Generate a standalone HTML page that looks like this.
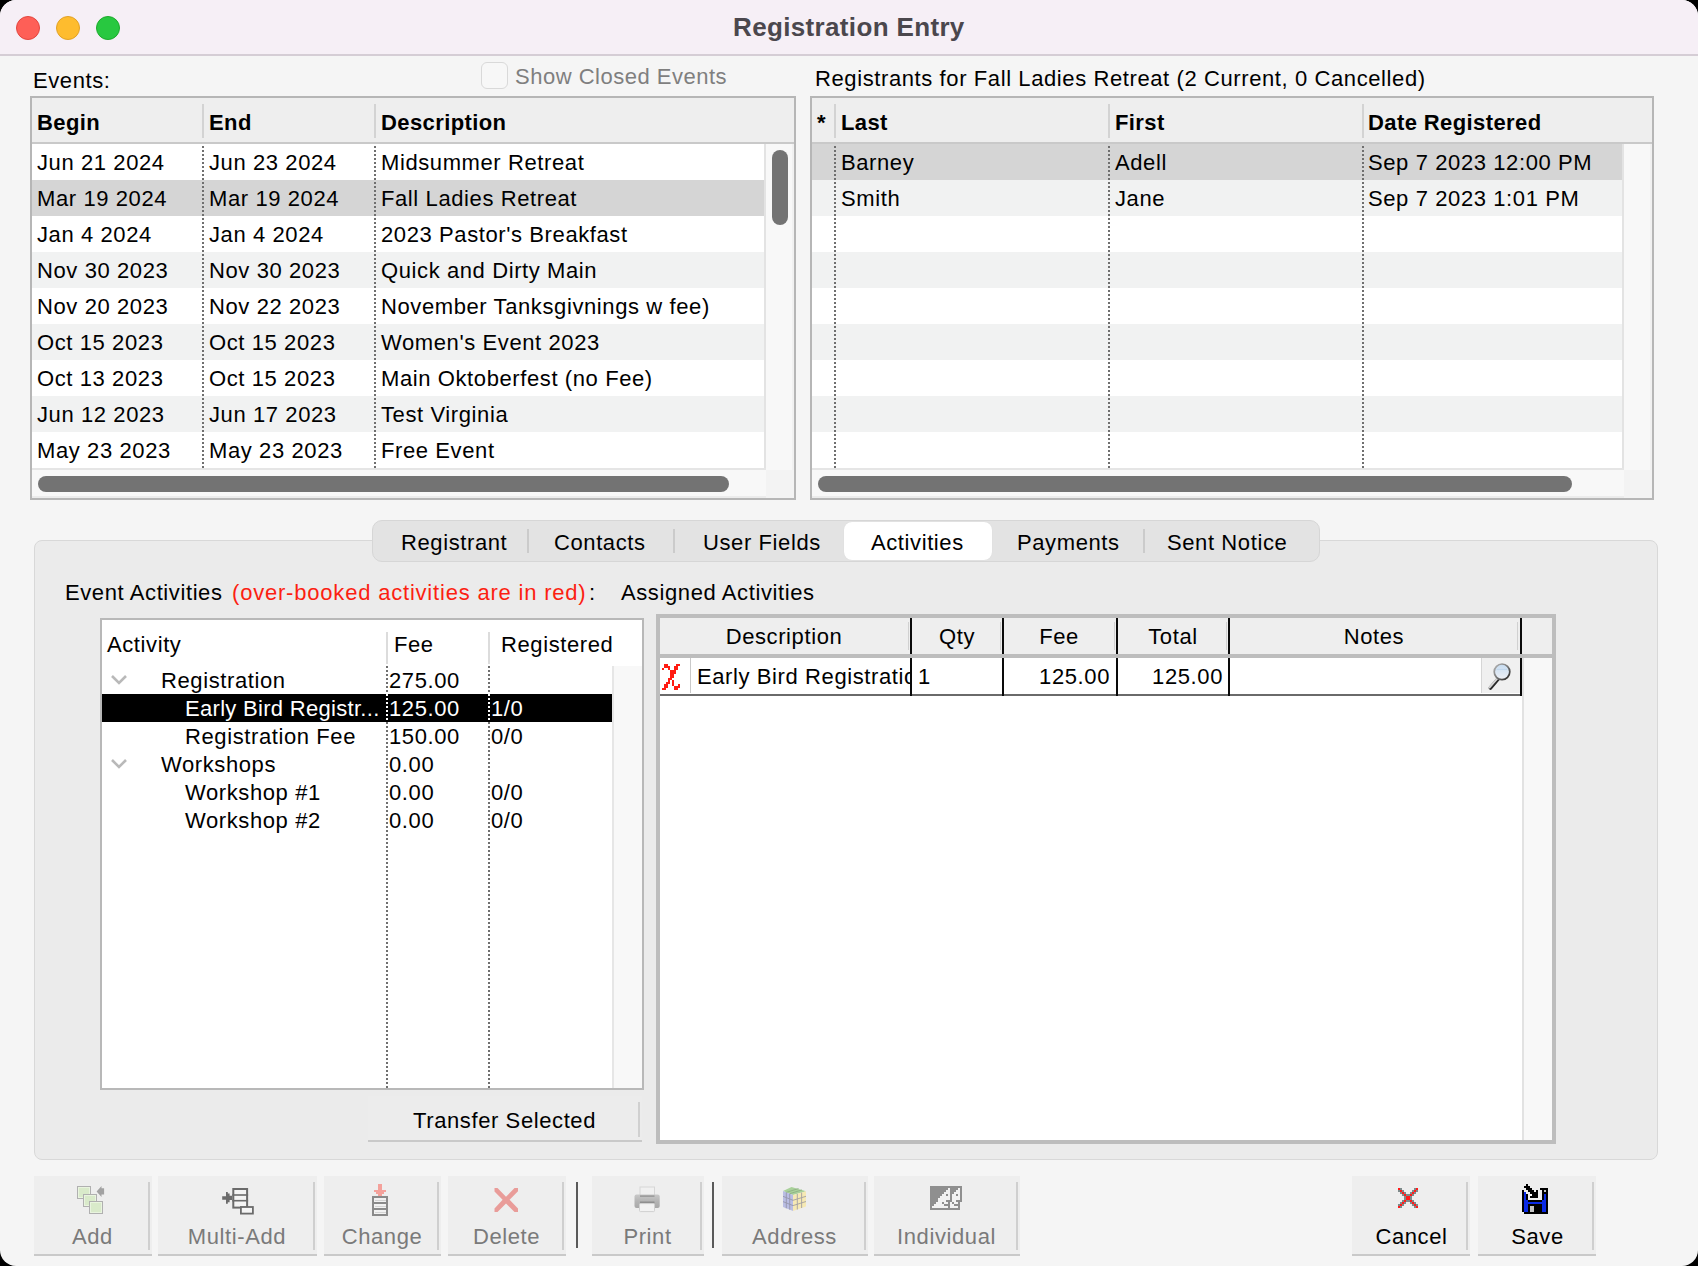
<!DOCTYPE html>
<html><head><meta charset="utf-8">
<style>
html,body{margin:0;padding:0;background:#000;width:1698px;height:1266px;overflow:hidden}
*{box-sizing:border-box}
#win{position:absolute;left:0;top:0;width:1698px;height:1266px;background:#f5f5f5;border-radius:16px;overflow:hidden;font-family:"Liberation Sans",sans-serif;color:#000}
.a{position:absolute}
.t{position:absolute;font-size:22px;line-height:22px;white-space:nowrap;letter-spacing:0.6px}
.b{font-weight:bold;letter-spacing:0.4px}
.dot{position:absolute;width:24px;height:24px;border-radius:50%}
.vd{position:absolute;width:2px;background:repeating-linear-gradient(to bottom,#6f6f6f 0,#6f6f6f 2px,transparent 2px,transparent 4px)}
.g{color:#7b7b7b}
</style></head><body>
<div id="win">

<div class="a" style="left:0px;top:0px;width:1698px;height:54px;background:#f6eff6"></div>
<div class="a" style="left:0px;top:54px;width:1698px;height:2px;background:#d5cdd5"></div>
<div class="dot" style="left:16px;top:16px;background:#fe5f57;border:1px solid #e2463f"></div>
<div class="dot" style="left:56px;top:16px;background:#febc2e;border:1px solid #e1a126"></div>
<div class="dot" style="left:96px;top:16px;background:#28c840;border:1px solid #1daa2c"></div>
<div class="t b" style="left:733px;top:14px;font-size:26px;line-height:26px;color:#4b474d;letter-spacing:0.35px">Registration Entry</div>
<div class="t " style="left:33px;top:70px;">Events:</div>
<div class="a" style="left:481px;top:62px;width:27px;height:27px;border:1px solid #d9d9d9;border-radius:6px;background:#f7f7f7"></div>
<div class="t " style="left:515px;top:66px;color:#7f7f7f;letter-spacing:0.5px">Show Closed Events</div>
<div class="t " style="left:815px;top:68px;">Registrants for Fall Ladies Retreat (2 Current, 0 Cancelled)</div>
<div class="a" style="left:30px;top:96px;width:766px;height:404px;background:#fff;border:2px solid #b6b6b6"></div>
<div class="a" style="left:32px;top:98px;width:762px;height:44px;background:#eeeeee"></div>
<div class="a" style="left:32px;top:142px;width:762px;height:2px;background:#c9c9c9"></div>
<div class="a" style="left:202px;top:104px;width:2px;height:34px;background:#d3d3d3"></div>
<div class="a" style="left:374px;top:104px;width:2px;height:34px;background:#d3d3d3"></div>
<div class="t b" style="left:37px;top:112px;">Begin</div>
<div class="t b" style="left:209px;top:112px;">End</div>
<div class="t b" style="left:381px;top:112px;">Description</div>
<div class="a" style="left:32px;top:144px;width:732px;height:36px;background:#ffffff"></div>
<div class="a" style="left:32px;top:180px;width:732px;height:36px;background:#d5d5d5"></div>
<div class="a" style="left:32px;top:216px;width:732px;height:36px;background:#ffffff"></div>
<div class="a" style="left:32px;top:252px;width:732px;height:36px;background:#f1f2f2"></div>
<div class="a" style="left:32px;top:288px;width:732px;height:36px;background:#ffffff"></div>
<div class="a" style="left:32px;top:324px;width:732px;height:36px;background:#f1f2f2"></div>
<div class="a" style="left:32px;top:360px;width:732px;height:36px;background:#ffffff"></div>
<div class="a" style="left:32px;top:396px;width:732px;height:36px;background:#f1f2f2"></div>
<div class="a" style="left:32px;top:432px;width:732px;height:36px;background:#ffffff"></div>
<div class="vd" style="left:202px;top:146px;height:322px"></div>
<div class="vd" style="left:374px;top:146px;height:322px"></div>
<div class="t " style="left:37px;top:152px;">Jun 21 2024</div>
<div class="t " style="left:209px;top:152px;">Jun 23 2024</div>
<div class="t " style="left:381px;top:152px;">Midsummer Retreat</div>
<div class="t " style="left:37px;top:188px;">Mar 19 2024</div>
<div class="t " style="left:209px;top:188px;">Mar 19 2024</div>
<div class="t " style="left:381px;top:188px;">Fall Ladies Retreat</div>
<div class="t " style="left:37px;top:224px;">Jan 4 2024</div>
<div class="t " style="left:209px;top:224px;">Jan 4 2024</div>
<div class="t " style="left:381px;top:224px;">2023 Pastor's Breakfast</div>
<div class="t " style="left:37px;top:260px;">Nov 30 2023</div>
<div class="t " style="left:209px;top:260px;">Nov 30 2023</div>
<div class="t " style="left:381px;top:260px;">Quick and Dirty Main</div>
<div class="t " style="left:37px;top:296px;">Nov 20 2023</div>
<div class="t " style="left:209px;top:296px;">Nov 22 2023</div>
<div class="t " style="left:381px;top:296px;">November Tanksgivnings w fee)</div>
<div class="t " style="left:37px;top:332px;">Oct 15 2023</div>
<div class="t " style="left:209px;top:332px;">Oct 15 2023</div>
<div class="t " style="left:381px;top:332px;">Women's Event 2023</div>
<div class="t " style="left:37px;top:368px;">Oct 13 2023</div>
<div class="t " style="left:209px;top:368px;">Oct 15 2023</div>
<div class="t " style="left:381px;top:368px;">Main Oktoberfest (no Fee)</div>
<div class="t " style="left:37px;top:404px;">Jun 12 2023</div>
<div class="t " style="left:209px;top:404px;">Jun 17 2023</div>
<div class="t " style="left:381px;top:404px;">Test Virginia</div>
<div class="t " style="left:37px;top:440px;">May 23 2023</div>
<div class="t " style="left:209px;top:440px;">May 23 2023</div>
<div class="t " style="left:381px;top:440px;">Free Event</div>
<div class="a" style="left:764px;top:144px;width:2px;height:326px;background:#e3e3e3"></div>
<div class="a" style="left:766px;top:144px;width:26px;height:326px;background:#f8f8f8"></div>
<div class="a" style="left:792px;top:144px;width:2px;height:326px;background:#f1f1f1"></div>
<div class="a" style="left:32px;top:468px;width:734px;height:2px;background:#e5e5e5"></div>
<div class="a" style="left:32px;top:470px;width:734px;height:26px;background:#f8f8f8"></div>
<div class="a" style="left:32px;top:496px;width:734px;height:2px;background:#ececec"></div>
<div class="a" style="left:766px;top:470px;width:28px;height:28px;background:#f3f3f3"></div>
<div class="a" style="left:772px;top:150px;width:16px;height:75px;background:#737373;border-radius:8px"></div>
<div class="a" style="left:38px;top:476px;width:691px;height:16px;background:#737373;border-radius:8px"></div>
<div class="a" style="left:810px;top:96px;width:844px;height:404px;background:#fff;border:2px solid #b6b6b6"></div>
<div class="a" style="left:812px;top:98px;width:840px;height:44px;background:#eeeeee"></div>
<div class="a" style="left:812px;top:142px;width:840px;height:2px;background:#c9c9c9"></div>
<div class="a" style="left:834px;top:104px;width:2px;height:34px;background:#d3d3d3"></div>
<div class="a" style="left:1108px;top:104px;width:2px;height:34px;background:#d3d3d3"></div>
<div class="a" style="left:1362px;top:104px;width:2px;height:34px;background:#d3d3d3"></div>
<div class="t b" style="left:817px;top:112px;">*</div>
<div class="t b" style="left:841px;top:112px;">Last</div>
<div class="t b" style="left:1115px;top:112px;">First</div>
<div class="t b" style="left:1368px;top:112px;">Date Registered</div>
<div class="a" style="left:812px;top:144px;width:810px;height:36px;background:#d5d5d5"></div>
<div class="a" style="left:812px;top:180px;width:810px;height:36px;background:#f1f2f2"></div>
<div class="a" style="left:812px;top:216px;width:810px;height:36px;background:#ffffff"></div>
<div class="a" style="left:812px;top:252px;width:810px;height:36px;background:#f1f2f2"></div>
<div class="a" style="left:812px;top:288px;width:810px;height:36px;background:#ffffff"></div>
<div class="a" style="left:812px;top:324px;width:810px;height:36px;background:#f1f2f2"></div>
<div class="a" style="left:812px;top:360px;width:810px;height:36px;background:#ffffff"></div>
<div class="a" style="left:812px;top:396px;width:810px;height:36px;background:#f1f2f2"></div>
<div class="a" style="left:812px;top:432px;width:810px;height:36px;background:#ffffff"></div>
<div class="vd" style="left:834px;top:146px;height:322px"></div>
<div class="vd" style="left:1108px;top:146px;height:322px"></div>
<div class="vd" style="left:1362px;top:146px;height:322px"></div>
<div class="t " style="left:841px;top:152px;">Barney</div>
<div class="t " style="left:1115px;top:152px;">Adell</div>
<div class="t " style="left:1368px;top:152px;">Sep 7 2023 12:00 PM</div>
<div class="t " style="left:841px;top:188px;">Smith</div>
<div class="t " style="left:1115px;top:188px;">Jane</div>
<div class="t " style="left:1368px;top:188px;">Sep 7 2023 1:01 PM</div>
<div class="a" style="left:1622px;top:144px;width:2px;height:326px;background:#e3e3e3"></div>
<div class="a" style="left:1624px;top:144px;width:26px;height:326px;background:#f8f8f8"></div>
<div class="a" style="left:1650px;top:144px;width:2px;height:326px;background:#f1f1f1"></div>
<div class="a" style="left:812px;top:468px;width:812px;height:2px;background:#e5e5e5"></div>
<div class="a" style="left:812px;top:470px;width:812px;height:26px;background:#f8f8f8"></div>
<div class="a" style="left:812px;top:496px;width:812px;height:2px;background:#ececec"></div>
<div class="a" style="left:1624px;top:470px;width:28px;height:28px;background:#f3f3f3"></div>
<div class="a" style="left:818px;top:476px;width:754px;height:16px;background:#737373;border-radius:8px"></div>
<div class="a" style="left:34px;top:540px;width:1624px;height:620px;background:#ebebeb;border:1px solid #d8d8d8;border-radius:8px"></div>
<div class="a" style="left:372px;top:520px;width:948px;height:42px;background:#e3e3e3;border:1px solid #d6d6d6;border-radius:10px"></div>
<div class="a" style="left:844px;top:522px;width:148px;height:38px;background:#ffffff;border-radius:8px;box-shadow:0 0 1px rgba(0,0,0,0.08)"></div>
<div class="a" style="left:527px;top:529px;width:2px;height:24px;background:#cbcbcb"></div>
<div class="a" style="left:673px;top:529px;width:2px;height:24px;background:#cbcbcb"></div>
<div class="a" style="left:1143px;top:529px;width:2px;height:24px;background:#cbcbcb"></div>
<div class="t " style="left:401px;top:532px;">Registrant</div>
<div class="t " style="left:554px;top:532px;">Contacts</div>
<div class="t " style="left:703px;top:532px;">User Fields</div>
<div class="t " style="left:871px;top:532px;">Activities</div>
<div class="t " style="left:1017px;top:532px;">Payments</div>
<div class="t " style="left:1167px;top:532px;">Sent Notice</div>
<div class="t " style="left:65px;top:582px;">Event Activities</div>
<div class="t " style="left:232px;top:582px;color:#fc1f12;letter-spacing:0.8px">(over-booked activities are in red)</div>
<div class="t " style="left:589px;top:582px;">:</div>
<div class="t " style="left:621px;top:582px;">Assigned Activities</div>
<div class="a" style="left:100px;top:618px;width:544px;height:472px;background:#fff;border:2px solid #b8b8b8"></div>
<div class="a" style="left:386px;top:632px;width:2px;height:32px;background:#dcdcdc"></div>
<div class="a" style="left:488px;top:632px;width:2px;height:32px;background:#dcdcdc"></div>
<div class="t " style="left:107px;top:634px;">Activity</div>
<div class="t " style="left:394px;top:634px;">Fee</div>
<div class="t " style="left:501px;top:634px;">Registered</div>
<div class="a" style="left:612px;top:666px;width:2px;height:422px;background:#e6e6e6"></div>
<div class="a" style="left:614px;top:666px;width:28px;height:422px;background:#f8f8f8"></div>
<div class="a" style="left:102px;top:694px;width:510px;height:28px;background:#000"></div>
<div class="vd" style="left:386px;top:666px;height:422px"></div>
<div class="vd" style="left:488px;top:666px;height:422px"></div>
<div class="a" style="left:386px;top:694px;width:2px;height:28px;background:repeating-linear-gradient(to bottom,#fff 0,#fff 2px,#000 2px,#000 4px)"></div>
<div class="a" style="left:488px;top:694px;width:2px;height:28px;background:repeating-linear-gradient(to bottom,#fff 0,#fff 2px,#000 2px,#000 4px)"></div>
<svg class="a" style="left:110px;top:674px" width="18" height="12" viewBox="0 0 18 12"><polyline points="2,2 9,9 16,2" fill="none" stroke="#b9b9b9" stroke-width="2.6" stroke-linecap="butt"/></svg>
<div class="t " style="left:161px;top:670px;">Registration</div>
<div class="t " style="left:389px;top:670px;">275.00</div>
<div class="t " style="left:185px;top:698px;color:#fff;letter-spacing:0.3px">Early Bird Registr...</div>
<div class="t " style="left:389px;top:698px;color:#fff">125.00</div>
<div class="t " style="left:491px;top:698px;color:#fff">1/0</div>
<div class="t " style="left:185px;top:726px;">Registration Fee</div>
<div class="t " style="left:389px;top:726px;">150.00</div>
<div class="t " style="left:491px;top:726px;">0/0</div>
<svg class="a" style="left:110px;top:758px" width="18" height="12" viewBox="0 0 18 12"><polyline points="2,2 9,9 16,2" fill="none" stroke="#b9b9b9" stroke-width="2.6" stroke-linecap="butt"/></svg>
<div class="t " style="left:161px;top:754px;">Workshops</div>
<div class="t " style="left:389px;top:754px;">0.00</div>
<div class="t " style="left:185px;top:782px;">Workshop #1</div>
<div class="t " style="left:389px;top:782px;">0.00</div>
<div class="t " style="left:491px;top:782px;">0/0</div>
<div class="t " style="left:185px;top:810px;">Workshop #2</div>
<div class="t " style="left:389px;top:810px;">0.00</div>
<div class="t " style="left:491px;top:810px;">0/0</div>
<div class="a" style="left:368px;top:1096px;width:274px;height:46px;background:#ececec;border-bottom:2px solid #c9c9c9"></div>
<div class="a" style="left:638px;top:1102px;width:2px;height:35px;background:#d0d0d0"></div>
<div class="t " style="left:413px;top:1110px;">Transfer Selected</div>
<div class="a" style="left:656px;top:614px;width:900px;height:530px;background:#fff;border:4px solid #bdbdbd"></div>
<div class="a" style="left:660px;top:618px;width:892px;height:36px;background:#eeeeee"></div>
<div class="a" style="left:660px;top:654px;width:892px;height:4px;background:#bdbdbd"></div>
<div class="a" style="left:1522px;top:658px;width:2px;height:482px;background:#e2e2e2"></div>
<div class="a" style="left:1524px;top:658px;width:28px;height:482px;background:#f8f8f8"></div>
<div class="a" style="left:908px;top:622px;width:1px;height:28px;background:#d0d0d0"></div>
<div class="a" style="left:1000px;top:622px;width:1px;height:28px;background:#d0d0d0"></div>
<div class="a" style="left:1114px;top:622px;width:1px;height:28px;background:#d0d0d0"></div>
<div class="a" style="left:1226px;top:622px;width:1px;height:28px;background:#d0d0d0"></div>
<div class="a" style="left:1517px;top:622px;width:1px;height:28px;background:#d0d0d0"></div>
<div class="a" style="left:660px;top:694px;width:862px;height:2px;background:#6a6a6a"></div>
<div class="a" style="left:910px;top:618px;width:2px;height:36px;background:#0a0a0a"></div>
<div class="a" style="left:910px;top:658px;width:2px;height:38px;background:#0a0a0a"></div>
<div class="a" style="left:1002px;top:618px;width:2px;height:36px;background:#0a0a0a"></div>
<div class="a" style="left:1002px;top:658px;width:2px;height:38px;background:#0a0a0a"></div>
<div class="a" style="left:1116px;top:618px;width:2px;height:36px;background:#0a0a0a"></div>
<div class="a" style="left:1116px;top:658px;width:2px;height:38px;background:#0a0a0a"></div>
<div class="a" style="left:1228px;top:618px;width:2px;height:36px;background:#0a0a0a"></div>
<div class="a" style="left:1228px;top:658px;width:2px;height:38px;background:#0a0a0a"></div>
<div class="a" style="left:1520px;top:618px;width:2px;height:36px;background:#0a0a0a"></div>
<div class="a" style="left:1520px;top:658px;width:2px;height:38px;background:#0a0a0a"></div>
<div class="t" style="left:634px;top:626px;width:300px;text-align:center">Description</div>
<div class="t" style="left:807px;top:626px;width:300px;text-align:center">Qty</div>
<div class="t" style="left:909px;top:626px;width:300px;text-align:center">Fee</div>
<div class="t" style="left:1023px;top:626px;width:300px;text-align:center">Total</div>
<div class="t" style="left:1224px;top:626px;width:300px;text-align:center">Notes</div>
<div class="a" style="left:690px;top:658px;width:1px;height:35px;background:#c9c9c9"></div>
<div class="a" style="left:696px;top:658px;width:214px;height:35px;overflow:hidden"><div class="t" style="left:1px;top:8px">Early Bird Registration</div></div>
<div class="t " style="left:918px;top:666px;">1</div>
<div class="t" style="left:960px;top:666px;width:150px;text-align:right">125.00</div>
<div class="t" style="left:1073px;top:666px;width:150px;text-align:right">125.00</div>
<div class="a" style="left:1481px;top:658px;width:39px;height:35px;background:#f0f0f0;border-left:1px solid #d6d6d6"></div>
<div class="a" style="left:34px;top:1176px;width:118px;height:80px;background:#eeeeee;border-bottom:2px solid #c9c9c9"></div>
<div class="a" style="left:148px;top:1182px;width:2px;height:68px;background:#cfcfcf"></div>
<div class="t" style="left:-65px;top:1226px;width:315px;text-align:center;color:#7a7a7a">Add</div>
<div class="a" style="left:158px;top:1176px;width:159px;height:80px;background:#eeeeee;border-bottom:2px solid #c9c9c9"></div>
<div class="a" style="left:313px;top:1182px;width:2px;height:68px;background:#cfcfcf"></div>
<div class="t" style="left:59px;top:1226px;width:356px;text-align:center;color:#7a7a7a">Multi-Add</div>
<div class="a" style="left:324px;top:1176px;width:117px;height:80px;background:#eeeeee;border-bottom:2px solid #c9c9c9"></div>
<div class="a" style="left:437px;top:1182px;width:2px;height:68px;background:#cfcfcf"></div>
<div class="t" style="left:225px;top:1226px;width:314px;text-align:center;color:#7a7a7a">Change</div>
<div class="a" style="left:448px;top:1176px;width:118px;height:80px;background:#eeeeee;border-bottom:2px solid #c9c9c9"></div>
<div class="a" style="left:562px;top:1182px;width:2px;height:68px;background:#cfcfcf"></div>
<div class="t" style="left:349px;top:1226px;width:315px;text-align:center;color:#7a7a7a">Delete</div>
<div class="a" style="left:592px;top:1176px;width:112px;height:80px;background:#eeeeee;border-bottom:2px solid #c9c9c9"></div>
<div class="a" style="left:700px;top:1182px;width:2px;height:68px;background:#cfcfcf"></div>
<div class="t" style="left:493px;top:1226px;width:309px;text-align:center;color:#7a7a7a">Print</div>
<div class="a" style="left:722px;top:1176px;width:146px;height:80px;background:#eeeeee;border-bottom:2px solid #c9c9c9"></div>
<div class="a" style="left:864px;top:1182px;width:2px;height:68px;background:#cfcfcf"></div>
<div class="t" style="left:623px;top:1226px;width:343px;text-align:center;color:#7a7a7a">Address</div>
<div class="a" style="left:874px;top:1176px;width:146px;height:80px;background:#eeeeee;border-bottom:2px solid #c9c9c9"></div>
<div class="a" style="left:1016px;top:1182px;width:2px;height:68px;background:#cfcfcf"></div>
<div class="t" style="left:775px;top:1226px;width:343px;text-align:center;color:#7a7a7a">Individual</div>
<div class="a" style="left:1352px;top:1176px;width:118px;height:80px;background:#eeeeee;border-bottom:2px solid #c9c9c9"></div>
<div class="a" style="left:1466px;top:1182px;width:2px;height:68px;background:#cfcfcf"></div>
<div class="t" style="left:1254px;top:1226px;width:315px;text-align:center;color:#000">Cancel</div>
<div class="a" style="left:1478px;top:1176px;width:118px;height:80px;background:#eeeeee;border-bottom:2px solid #c9c9c9"></div>
<div class="a" style="left:1592px;top:1182px;width:2px;height:68px;background:#cfcfcf"></div>
<div class="t" style="left:1380px;top:1226px;width:315px;text-align:center;color:#000">Save</div>
<div class="a" style="left:576px;top:1182px;width:2px;height:66px;background:#5a5a5a"></div>
<div class="a" style="left:712px;top:1182px;width:2px;height:66px;background:#5a5a5a"></div>
<svg class="a" style="left:662px;top:664px" width="18" height="26" shape-rendering="crispEdges"><rect x="2" y="0" width="4" height="2" fill="#ff1c12"/><rect x="14" y="0" width="4" height="2" fill="#ff1c12"/><rect x="2" y="2" width="6" height="2" fill="#ff1c12"/><rect x="12" y="2" width="4" height="2" fill="#ff1c12"/><rect x="0" y="4" width="2" height="2" fill="#ff1c12"/><rect x="6" y="4" width="2" height="2" fill="#ff1c12"/><rect x="12" y="4" width="4" height="2" fill="#ff1c12"/><rect x="8" y="6" width="6" height="2" fill="#ff1c12"/><rect x="8" y="8" width="6" height="2" fill="#ff1c12"/><rect x="8" y="10" width="4" height="2" fill="#ff1c12"/><rect x="8" y="12" width="4" height="2" fill="#ff1c12"/><rect x="6" y="14" width="4" height="2" fill="#ff1c12"/><rect x="6" y="16" width="2" height="2" fill="#ff1c12"/><rect x="10" y="16" width="2" height="2" fill="#ff1c12"/><rect x="4" y="18" width="4" height="2" fill="#ff1c12"/><rect x="10" y="18" width="2" height="2" fill="#ff1c12"/><rect x="2" y="20" width="4" height="2" fill="#ff1c12"/><rect x="10" y="20" width="2" height="2" fill="#ff1c12"/><rect x="16" y="20" width="2" height="2" fill="#ff1c12"/><rect x="2" y="22" width="4" height="2" fill="#ff1c12"/><rect x="12" y="22" width="6" height="2" fill="#ff1c12"/><rect x="0" y="24" width="4" height="2" fill="#ff1c12"/><rect x="12" y="24" width="4" height="2" fill="#ff1c12"/></svg>
<svg class="a" style="left:1482px;top:658px" width="38" height="36" viewBox="0 0 38 36"><defs><linearGradient id="lens" x1="0" y1="0" x2="0" y2="1"><stop offset="0" stop-color="#c6dcf1"/><stop offset="1" stop-color="#eef0f5"/></linearGradient><linearGradient id="rim" x1="0" y1="0" x2="1" y2="1"><stop offset="0" stop-color="#b8b8b8"/><stop offset="0.55" stop-color="#707070"/><stop offset="1" stop-color="#202020"/></linearGradient></defs><line x1="16.2" y1="20.8" x2="8.4" y2="30.0" stroke="#2a2a2a" stroke-width="3.6" stroke-linecap="round"/><line x1="15.4" y1="20.4" x2="7.6" y2="29.4" stroke="#d6d6d6" stroke-width="2.0" stroke-linecap="round"/><circle cx="20" cy="13.8" r="7.8" fill="url(#lens)" stroke="url(#rim)" stroke-width="1.7"/><line x1="14.6" y1="11.4" x2="25" y2="11.4" stroke="#b9d2ea" stroke-width="0.8"/></svg>
<svg class="a" style="left:70px;top:1180px" width="40" height="40"><rect x="7.5" y="6.5" width="13" height="12" fill="#d9eaca" stroke="#b0b0b0" stroke-width="1"/><rect x="8.5" y="7.5" width="11" height="10" fill="none" stroke="#e9f4df" stroke-width="1"/><rect x="13.5" y="14.5" width="13" height="12" fill="#d9eaca" stroke="#b0b0b0" stroke-width="1"/><rect x="14.5" y="15.5" width="11" height="10" fill="none" stroke="#e9f4df" stroke-width="1"/><rect x="19.5" y="21.5" width="13" height="12" fill="#d9eaca" stroke="#b0b0b0" stroke-width="1"/><rect x="20.5" y="22.5" width="11" height="10" fill="none" stroke="#e9f4df" stroke-width="1"/><polygon points="26.6,11.6 31.5,6 31.5,8.2 34.1,8.2 34.1,14.5 31.5,14.5 31.5,17" fill="#a2a2a2"/></svg>
<svg class="a" style="left:220px;top:1184px" width="40" height="34"><rect x="13.3" y="5" width="13.8" height="18.6" fill="#f4f4f4" stroke="#6b6b6b" stroke-width="2"/><rect x="12.3" y="10.2" width="15.8" height="1.6" fill="#6b6b6b"/><rect x="12.3" y="15.9" width="15.8" height="1.6" fill="#6b6b6b"/><rect x="20.9" y="23" width="12" height="6.6" fill="#f4f4f4" stroke="#6b6b6b" stroke-width="1.8"/><polygon points="2.2,12.3 6,12.3 6,8 7.8,8 7.8,9.6 9.6,9.6 9.6,11.8 12.3,11.8 12.3,16 9.6,16 9.6,18.2 7.8,18.2 7.8,19.8 6,19.8 6,15.8 2.2,15.8" fill="#6b6b6b"/></svg>
<svg class="a" style="left:370px;top:1182px" width="20" height="36" shape-rendering="crispEdges"><rect x="3" y="15" width="14" height="18" fill="#f2f2f2" stroke="#8a8a8a" stroke-width="2"/><rect x="4" y="20" width="12" height="2" fill="#8a8a8a"/><rect x="4" y="26" width="12" height="2" fill="#8a8a8a"/><rect x="5" y="18" width="11" height="1" fill="#d4d4d4"/><rect x="5" y="24" width="11" height="1" fill="#d4d4d4"/><rect x="5" y="30" width="11" height="1" fill="#d4d4d4"/><rect x="8" y="2" width="4" height="12" fill="#f4a19b"/><rect x="4" y="8" width="12" height="2" fill="#f4a19b"/><rect x="6" y="10" width="8" height="2" fill="#f4a19b"/></svg>
<svg class="a" style="left:490px;top:1184px" width="32" height="32"><polygon points="4.5,4 7.5,4 16,12.8 24.5,4 28,4 28,7.2 19.6,15.8 28,24.4 28,28 24.5,28 16,19.6 7.5,28 4.5,28 4.5,24.6 12.6,15.8 4.5,7.6" fill="#e99c99"/></svg>
<svg class="a" style="left:630px;top:1184px" width="34" height="32"><defs><linearGradient id="pb" x1="0" y1="0" x2="0" y2="1"><stop offset="0" stop-color="#c8c8c8"/><stop offset="0.5" stop-color="#b4b4b4"/><stop offset="1" stop-color="#a8a8a8"/></linearGradient></defs><rect x="10" y="3" width="14.5" height="9" fill="#f0f0f0" stroke="#d6d6d6" stroke-width="1"/><rect x="4.5" y="10.5" width="25.2" height="13.5" rx="2" fill="url(#pb)"/><rect x="10" y="11.5" width="14.5" height="1.2" fill="#8e8e8e"/><rect x="10" y="17.5" width="14.5" height="1.6" fill="#8e8e8e"/><rect x="9.5" y="19.6" width="15" height="8" rx="1" fill="#f2f2f2" stroke="#d0d0d0" stroke-width="1"/></svg>
<svg class="a" style="left:780px;top:1184px" width="30" height="30"><polygon points="3,7 11.5,3 26,7.2 13,11" fill="#a9d19a"/><polygon points="3,7 13,11 13,27 3,23" fill="#b9bde3"/><polygon points="13,11 26,7.2 26,22.5 13,27" fill="#f6e9b4"/><g stroke="#8f8f9f" stroke-width="0.9" fill="none" opacity="0.8"><line x1="6.3" y1="8.4" x2="6.3" y2="24.3"/><line x1="9.7" y1="9.7" x2="9.7" y2="25.7"/><line x1="3" y1="12.3" x2="13" y2="16.3"/><line x1="3" y1="17.6" x2="13" y2="21.6"/><line x1="17.3" y1="9.8" x2="17.3" y2="25.5"/><line x1="21.6" y1="8.5" x2="21.6" y2="24"/><line x1="13" y1="16.3" x2="26" y2="12.3"/><line x1="13" y1="21.6" x2="26" y2="17.5"/><line x1="6.3" y1="8.4" x2="18.6" y2="4.5" stroke="#88a880"/><line x1="9.7" y1="9.7" x2="22" y2="5.9" stroke="#88a880"/></g></svg>
<svg class="a" style="left:930px;top:1186px" width="32" height="24" shape-rendering="crispEdges"><rect x="0" y="0" width="32" height="2" fill="#8f8f8f"/><rect x="0" y="2" width="18" height="2" fill="#8f8f8f"/><rect x="18" y="2" width="2" height="2" fill="#f2f2f2"/><rect x="20" y="2" width="8" height="2" fill="#8f8f8f"/><rect x="28" y="2" width="2" height="2" fill="#f2f2f2"/><rect x="30" y="2" width="2" height="2" fill="#8f8f8f"/><rect x="0" y="4" width="16" height="2" fill="#8f8f8f"/><rect x="16" y="4" width="4" height="2" fill="#f2f2f2"/><rect x="20" y="4" width="6" height="2" fill="#8f8f8f"/><rect x="26" y="4" width="4" height="2" fill="#f2f2f2"/><rect x="30" y="4" width="2" height="2" fill="#8f8f8f"/><rect x="0" y="6" width="14" height="2" fill="#8f8f8f"/><rect x="14" y="6" width="6" height="2" fill="#f2f2f2"/><rect x="20" y="6" width="4" height="2" fill="#8f8f8f"/><rect x="24" y="6" width="6" height="2" fill="#f2f2f2"/><rect x="30" y="6" width="2" height="2" fill="#8f8f8f"/><rect x="0" y="8" width="12" height="2" fill="#8f8f8f"/><rect x="12" y="8" width="4" height="2" fill="#f2f2f2"/><rect x="16" y="8" width="2" height="2" fill="#8f8f8f"/><rect x="18" y="8" width="2" height="2" fill="#f2f2f2"/><rect x="20" y="8" width="2" height="2" fill="#8f8f8f"/><rect x="22" y="8" width="4" height="2" fill="#f2f2f2"/><rect x="26" y="8" width="2" height="2" fill="#8f8f8f"/><rect x="28" y="8" width="2" height="2" fill="#f2f2f2"/><rect x="30" y="8" width="2" height="2" fill="#8f8f8f"/><rect x="0" y="10" width="10" height="2" fill="#8f8f8f"/><rect x="10" y="10" width="10" height="2" fill="#f2f2f2"/><rect x="20" y="10" width="2" height="2" fill="#8f8f8f"/><rect x="22" y="10" width="8" height="2" fill="#f2f2f2"/><rect x="30" y="10" width="2" height="2" fill="#8f8f8f"/><rect x="0" y="12" width="8" height="2" fill="#8f8f8f"/><rect x="8" y="12" width="12" height="2" fill="#f2f2f2"/><rect x="20" y="12" width="2" height="2" fill="#8f8f8f"/><rect x="22" y="12" width="8" height="2" fill="#f2f2f2"/><rect x="30" y="12" width="2" height="2" fill="#8f8f8f"/><rect x="0" y="14" width="8" height="2" fill="#8f8f8f"/><rect x="8" y="14" width="8" height="2" fill="#f2f2f2"/><rect x="16" y="14" width="6" height="2" fill="#8f8f8f"/><rect x="22" y="14" width="4" height="2" fill="#f2f2f2"/><rect x="26" y="14" width="6" height="2" fill="#8f8f8f"/><rect x="0" y="16" width="6" height="2" fill="#8f8f8f"/><rect x="6" y="16" width="6" height="2" fill="#f2f2f2"/><rect x="12" y="16" width="2" height="2" fill="#8f8f8f"/><rect x="14" y="16" width="4" height="2" fill="#f2f2f2"/><rect x="18" y="16" width="2" height="2" fill="#8f8f8f"/><rect x="20" y="16" width="2" height="2" fill="#f2f2f2"/><rect x="22" y="16" width="2" height="2" fill="#8f8f8f"/><rect x="24" y="16" width="4" height="2" fill="#f2f2f2"/><rect x="28" y="16" width="2" height="2" fill="#8f8f8f"/><rect x="0" y="18" width="4" height="2" fill="#8f8f8f"/><rect x="4" y="18" width="10" height="2" fill="#f2f2f2"/><rect x="14" y="18" width="6" height="2" fill="#8f8f8f"/><rect x="20" y="18" width="4" height="2" fill="#f2f2f2"/><rect x="24" y="18" width="6" height="2" fill="#8f8f8f"/><rect x="0" y="20" width="2" height="2" fill="#8f8f8f"/><rect x="2" y="20" width="16" height="2" fill="#f2f2f2"/><rect x="18" y="20" width="2" height="2" fill="#8f8f8f"/><rect x="20" y="20" width="8" height="2" fill="#f2f2f2"/><rect x="28" y="20" width="2" height="2" fill="#8f8f8f"/><rect x="0" y="22" width="30" height="2" fill="#8f8f8f"/></svg>
<svg class="a" style="left:1398px;top:1188px" width="20" height="20" shape-rendering="crispEdges"><rect x="0" y="0" width="2" height="2" fill="#ff1a1a"/><rect x="2" y="0" width="2" height="2" fill="#7e8a8a"/><rect x="16" y="0" width="2" height="2" fill="#7e8a8a"/><rect x="18" y="0" width="2" height="2" fill="#ff1a1a"/><rect x="0" y="2" width="2" height="2" fill="#7e8a8a"/><rect x="2" y="2" width="2" height="2" fill="#ff1a1a"/><rect x="4" y="2" width="2" height="2" fill="#7e8a8a"/><rect x="14" y="2" width="2" height="2" fill="#7e8a8a"/><rect x="16" y="2" width="2" height="2" fill="#ff1a1a"/><rect x="18" y="2" width="2" height="2" fill="#7e8a8a"/><rect x="2" y="4" width="2" height="2" fill="#7e8a8a"/><rect x="4" y="4" width="2" height="2" fill="#ff1a1a"/><rect x="6" y="4" width="2" height="2" fill="#7e8a8a"/><rect x="12" y="4" width="2" height="2" fill="#7e8a8a"/><rect x="14" y="4" width="2" height="2" fill="#ff1a1a"/><rect x="16" y="4" width="2" height="2" fill="#7e8a8a"/><rect x="4" y="6" width="2" height="2" fill="#7e8a8a"/><rect x="6" y="6" width="2" height="2" fill="#ff1a1a"/><rect x="8" y="6" width="4" height="2" fill="#7e8a8a"/><rect x="12" y="6" width="2" height="2" fill="#ff1a1a"/><rect x="14" y="6" width="2" height="2" fill="#7e8a8a"/><rect x="6" y="8" width="2" height="2" fill="#7e8a8a"/><rect x="8" y="8" width="4" height="2" fill="#ff1a1a"/><rect x="12" y="8" width="2" height="2" fill="#7e8a8a"/><rect x="6" y="10" width="2" height="2" fill="#7e8a8a"/><rect x="8" y="10" width="4" height="2" fill="#ff1a1a"/><rect x="12" y="10" width="2" height="2" fill="#7e8a8a"/><rect x="4" y="12" width="2" height="2" fill="#7e8a8a"/><rect x="6" y="12" width="2" height="2" fill="#ff1a1a"/><rect x="8" y="12" width="4" height="2" fill="#7e8a8a"/><rect x="12" y="12" width="2" height="2" fill="#ff1a1a"/><rect x="14" y="12" width="2" height="2" fill="#7e8a8a"/><rect x="2" y="14" width="2" height="2" fill="#7e8a8a"/><rect x="4" y="14" width="2" height="2" fill="#ff1a1a"/><rect x="6" y="14" width="2" height="2" fill="#7e8a8a"/><rect x="12" y="14" width="2" height="2" fill="#7e8a8a"/><rect x="14" y="14" width="2" height="2" fill="#ff1a1a"/><rect x="16" y="14" width="2" height="2" fill="#7e8a8a"/><rect x="0" y="16" width="2" height="2" fill="#7e8a8a"/><rect x="2" y="16" width="2" height="2" fill="#ff1a1a"/><rect x="4" y="16" width="2" height="2" fill="#7e8a8a"/><rect x="14" y="16" width="2" height="2" fill="#7e8a8a"/><rect x="16" y="16" width="2" height="2" fill="#ff1a1a"/><rect x="18" y="16" width="2" height="2" fill="#7e8a8a"/><rect x="0" y="18" width="2" height="2" fill="#ff1a1a"/><rect x="2" y="18" width="2" height="2" fill="#7e8a8a"/><rect x="16" y="18" width="2" height="2" fill="#7e8a8a"/><rect x="18" y="18" width="2" height="2" fill="#ff1a1a"/></svg>
<svg class="a" style="left:1522px;top:1184px" width="26" height="30" shape-rendering="crispEdges"><rect x="4" y="0" width="2" height="2" fill="#000"/><rect x="2" y="2" width="6" height="2" fill="#000"/><rect x="4" y="4" width="6" height="2" fill="#000"/><rect x="18" y="4" width="8" height="2" fill="#000"/><rect x="0" y="6" width="2" height="2" fill="#000"/><rect x="6" y="6" width="6" height="2" fill="#000"/><rect x="14" y="6" width="2" height="2" fill="#000"/><rect x="20" y="6" width="2" height="2" fill="#000"/><rect x="22" y="6" width="2" height="2" fill="#c4c4c4"/><rect x="24" y="6" width="2" height="2" fill="#000"/><rect x="0" y="8" width="2" height="2" fill="#000"/><rect x="2" y="8" width="2" height="2" fill="#0a2ae6"/><rect x="8" y="8" width="8" height="2" fill="#000"/><rect x="20" y="8" width="6" height="2" fill="#000"/><rect x="0" y="10" width="2" height="2" fill="#000"/><rect x="2" y="10" width="2" height="2" fill="#0a2ae6"/><rect x="4" y="10" width="2" height="2" fill="#000"/><rect x="8" y="10" width="2" height="2" fill="#ffffff"/><rect x="10" y="10" width="6" height="2" fill="#000"/><rect x="20" y="10" width="2" height="2" fill="#000"/><rect x="22" y="10" width="2" height="2" fill="#0a2ae6"/><rect x="24" y="10" width="2" height="2" fill="#000"/><rect x="0" y="12" width="2" height="2" fill="#000"/><rect x="2" y="12" width="2" height="2" fill="#0a2ae6"/><rect x="4" y="12" width="2" height="2" fill="#000"/><rect x="8" y="12" width="8" height="2" fill="#000"/><rect x="20" y="12" width="2" height="2" fill="#000"/><rect x="22" y="12" width="2" height="2" fill="#0a2ae6"/><rect x="24" y="12" width="2" height="2" fill="#000"/><rect x="0" y="14" width="2" height="2" fill="#000"/><rect x="2" y="14" width="2" height="2" fill="#0a2ae6"/><rect x="4" y="14" width="2" height="2" fill="#000"/><rect x="20" y="14" width="2" height="2" fill="#000"/><rect x="22" y="14" width="2" height="2" fill="#0a2ae6"/><rect x="24" y="14" width="2" height="2" fill="#000"/><rect x="0" y="16" width="2" height="2" fill="#000"/><rect x="2" y="16" width="4" height="2" fill="#0a2ae6"/><rect x="6" y="16" width="14" height="2" fill="#000"/><rect x="20" y="16" width="4" height="2" fill="#0a2ae6"/><rect x="24" y="16" width="2" height="2" fill="#000"/><rect x="0" y="18" width="2" height="2" fill="#000"/><rect x="2" y="18" width="22" height="2" fill="#0a2ae6"/><rect x="24" y="18" width="2" height="2" fill="#000"/><rect x="0" y="20" width="2" height="2" fill="#000"/><rect x="2" y="20" width="4" height="2" fill="#0a2ae6"/><rect x="6" y="20" width="14" height="2" fill="#000"/><rect x="20" y="20" width="4" height="2" fill="#0a2ae6"/><rect x="24" y="20" width="2" height="2" fill="#000"/><rect x="0" y="22" width="2" height="2" fill="#000"/><rect x="2" y="22" width="4" height="2" fill="#0a2ae6"/><rect x="6" y="22" width="2" height="2" fill="#000"/><rect x="8" y="22" width="4" height="2" fill="#c4c4c4"/><rect x="12" y="22" width="8" height="2" fill="#000"/><rect x="20" y="22" width="4" height="2" fill="#0a2ae6"/><rect x="24" y="22" width="2" height="2" fill="#000"/><rect x="0" y="24" width="2" height="2" fill="#000"/><rect x="2" y="24" width="4" height="2" fill="#0a2ae6"/><rect x="6" y="24" width="2" height="2" fill="#000"/><rect x="8" y="24" width="4" height="2" fill="#c4c4c4"/><rect x="12" y="24" width="8" height="2" fill="#000"/><rect x="20" y="24" width="4" height="2" fill="#0a2ae6"/><rect x="24" y="24" width="2" height="2" fill="#000"/><rect x="0" y="26" width="2" height="2" fill="#000"/><rect x="2" y="26" width="4" height="2" fill="#0a2ae6"/><rect x="6" y="26" width="2" height="2" fill="#000"/><rect x="8" y="26" width="4" height="2" fill="#c4c4c4"/><rect x="12" y="26" width="8" height="2" fill="#000"/><rect x="20" y="26" width="4" height="2" fill="#0a2ae6"/><rect x="24" y="26" width="2" height="2" fill="#000"/><rect x="2" y="28" width="24" height="2" fill="#000"/></svg>
</div></body></html>
